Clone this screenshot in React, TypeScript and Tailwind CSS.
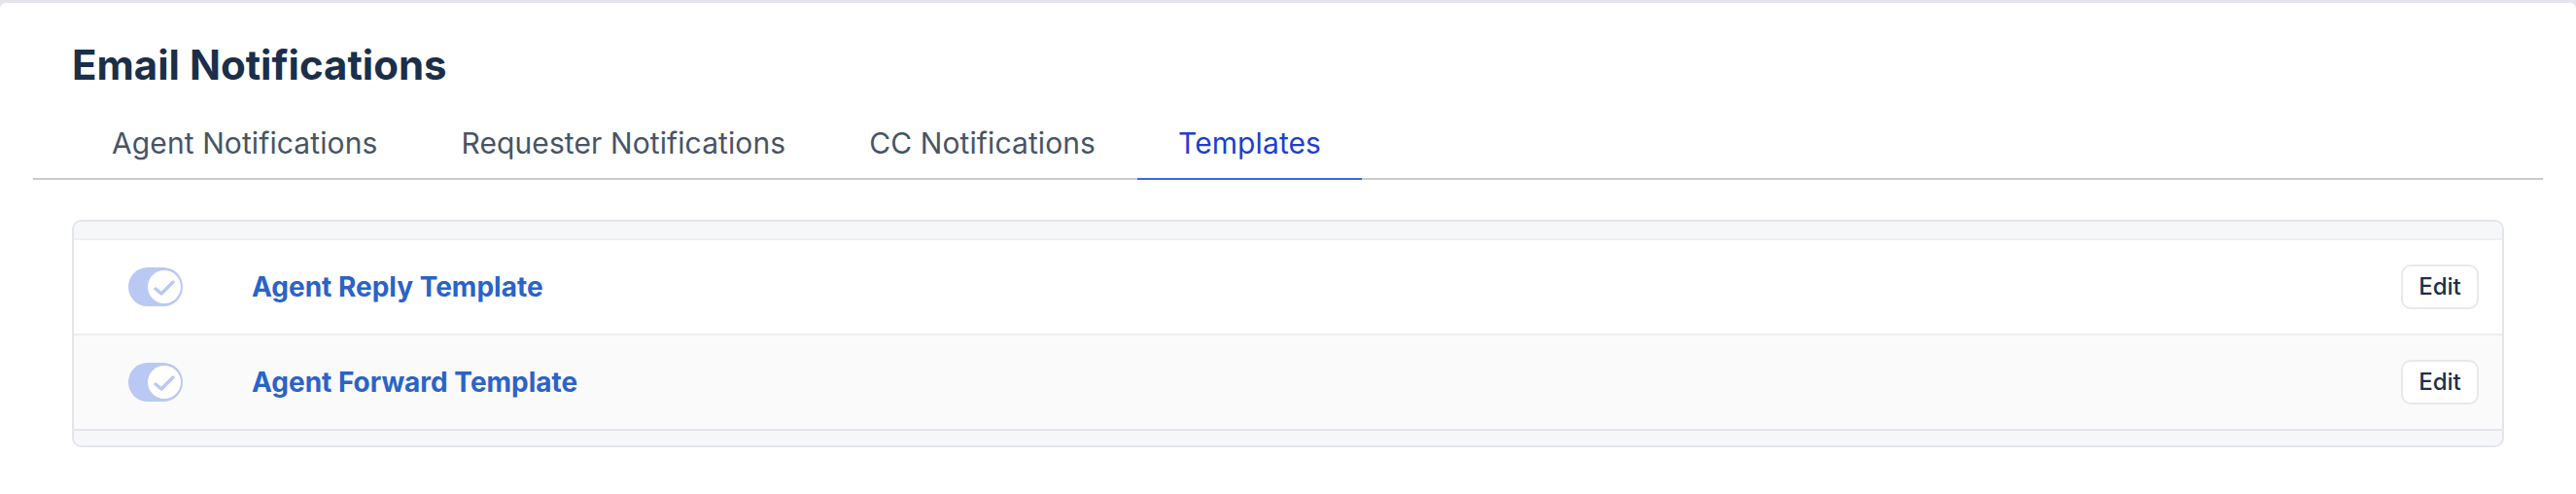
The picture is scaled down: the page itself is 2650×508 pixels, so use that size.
import React from "react";

const tabs = [
  { label: "Agent Notifications", active: false },
  { label: "Requester Notifications", active: false },
  { label: "CC Notifications", active: false },
  { label: "Templates", active: true },
];

const rows = [
  { label: "Agent Reply Template", bg: "bg-white" },
  { label: "Agent Forward Template", bg: "bg-[#fafafb]" },
];

function Toggle() {
  return (
    <div className="flex h-[40px] w-[56px] items-center justify-end rounded-full bg-[#b9c9f4] pr-[2px]">
      <div className="flex h-[34px] w-[34px] items-center justify-center rounded-full bg-white">
        <svg width="34" height="34" viewBox="0 0 34 34" fill="none">
          <path
            d="M8 19 L14 24 L26 12"
            stroke="#b9c9f4"
            strokeWidth="3.5"
            strokeLinecap="round"
            strokeLinejoin="round"
          />
        </svg>
      </div>
    </div>
  );
}

export default function App() {
  return (
    <div
      className="w-[2650px] bg-[#e4e5ea] pt-[3px]"
      style={{ fontFamily: "Inter, 'Noto Sans', sans-serif" }}
    >
      <div className="rounded-t-[6px] bg-white px-[74px] pb-[50px] pt-[39px]">
        <h1 className="text-[42px] font-bold leading-[50px] text-[#1b2f4a]">
          Email Notifications
        </h1>
        <div className="mx-[-40px] mt-[34px] flex border-b-2 border-[#cbcbcb] pl-[38px] pr-[40px]">
          {tabs.map((t) => (
            <div
              key={t.label}
              className={
                t.active
                  ? "-mb-[2px] border-b-2 border-[#3b6ae0] px-[42px] pb-[15px] text-[30px] leading-[42px] tracking-[0.1px] text-[#1d3fcf]"
                  : "-mb-[2px] border-b-2 border-transparent px-[43px] pb-[15px] text-[30px] leading-[42px] tracking-[0.1px] text-[#475467]"
              }
            >
              {t.label}
            </div>
          ))}
        </div>
        <div className="mt-[41px] overflow-hidden rounded-[10px] border-2 border-[#e3e5eb]">
          <div className="h-[17px] bg-[#f6f7f9]" />
          {rows.map((r) => (
            <div
              key={r.label}
              className={`flex h-[98px] items-center border-t-2 border-[#eceef1] pl-[56px] pr-[24px] ${r.bg}`}
            >
              <Toggle />
              <div className="ml-[71px] flex-1 text-[28px] font-bold leading-[36px] text-[#2b63c8]">
                {r.label}
              </div>
              <button className="h-[46px] w-[80px] rounded-[10px] border-2 border-[#e7e9ee] bg-white text-[24px] font-medium text-[#1e2f4a]">
                Edit
              </button>
            </div>
          ))}
          <div className="h-[17px] border-t-2 border-[#e3e5eb] bg-[#f6f7f9]" />
        </div>
      </div>
    </div>
  );
}
